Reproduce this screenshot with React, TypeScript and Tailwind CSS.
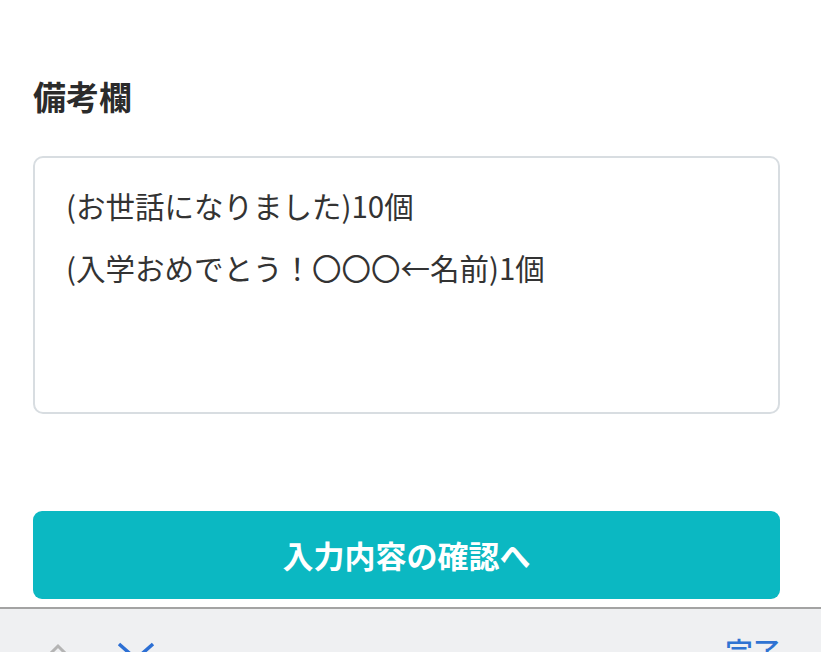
import React from "react";

const font = { fontFamily: '"Noto Sans CJK JP", "Noto Sans", sans-serif' };

export default function App() {
  return (
    <div className="w-[821px] h-[652px] overflow-hidden bg-white flex flex-col" style={font}>
      <div className="flex-1 pl-[33px] pr-[41px] pt-[74px] flex flex-col">
        <h2 className="text-[33px] leading-[44px] font-bold text-[#2b2b2b]">備考欄</h2>
        <div className="mt-[38px] h-[258px] rounded-[10px] border-2 border-[#d8dde1] px-[31px] pt-[28px] text-[29.5px] leading-[62px] text-[#333333]">
          <div className="-mt-[12px]">(お世話になりました)10個</div>
          <div>(入学おめでとう！〇〇〇←名前)1個</div>
        </div>
        <button className="mt-[97px] h-[88px] w-full rounded-[9px] bg-[#0bb8c2] text-white text-[31px] font-bold">
          入力内容の確認へ
        </button>
      </div>
      <div className="h-[45px] border-t-2 border-[#a3a3a3] bg-[#eff0f2] flex items-start px-[44px] pt-[30px] relative">
        <svg width="28" height="20" viewBox="0 0 28 20" className="mt-[2px]">
          <path d="M2 17 L14 5 L26 17" fill="none" stroke="#b4b4b4" strokeWidth="3" />
        </svg>
        <svg width="38" height="20" viewBox="0 0 38 20" className="ml-[45px] mt-[2px]">
          <path d="M2 3 L19 18 L36 3" fill="none" stroke="#2c6fd4" strokeWidth="3.5" />
        </svg>
        <span className="ml-auto mr-[-4px] -mt-[2px] text-[28px] leading-none font-medium text-[#2f73d2]">完了</span>
      </div>
    </div>
  );
}
